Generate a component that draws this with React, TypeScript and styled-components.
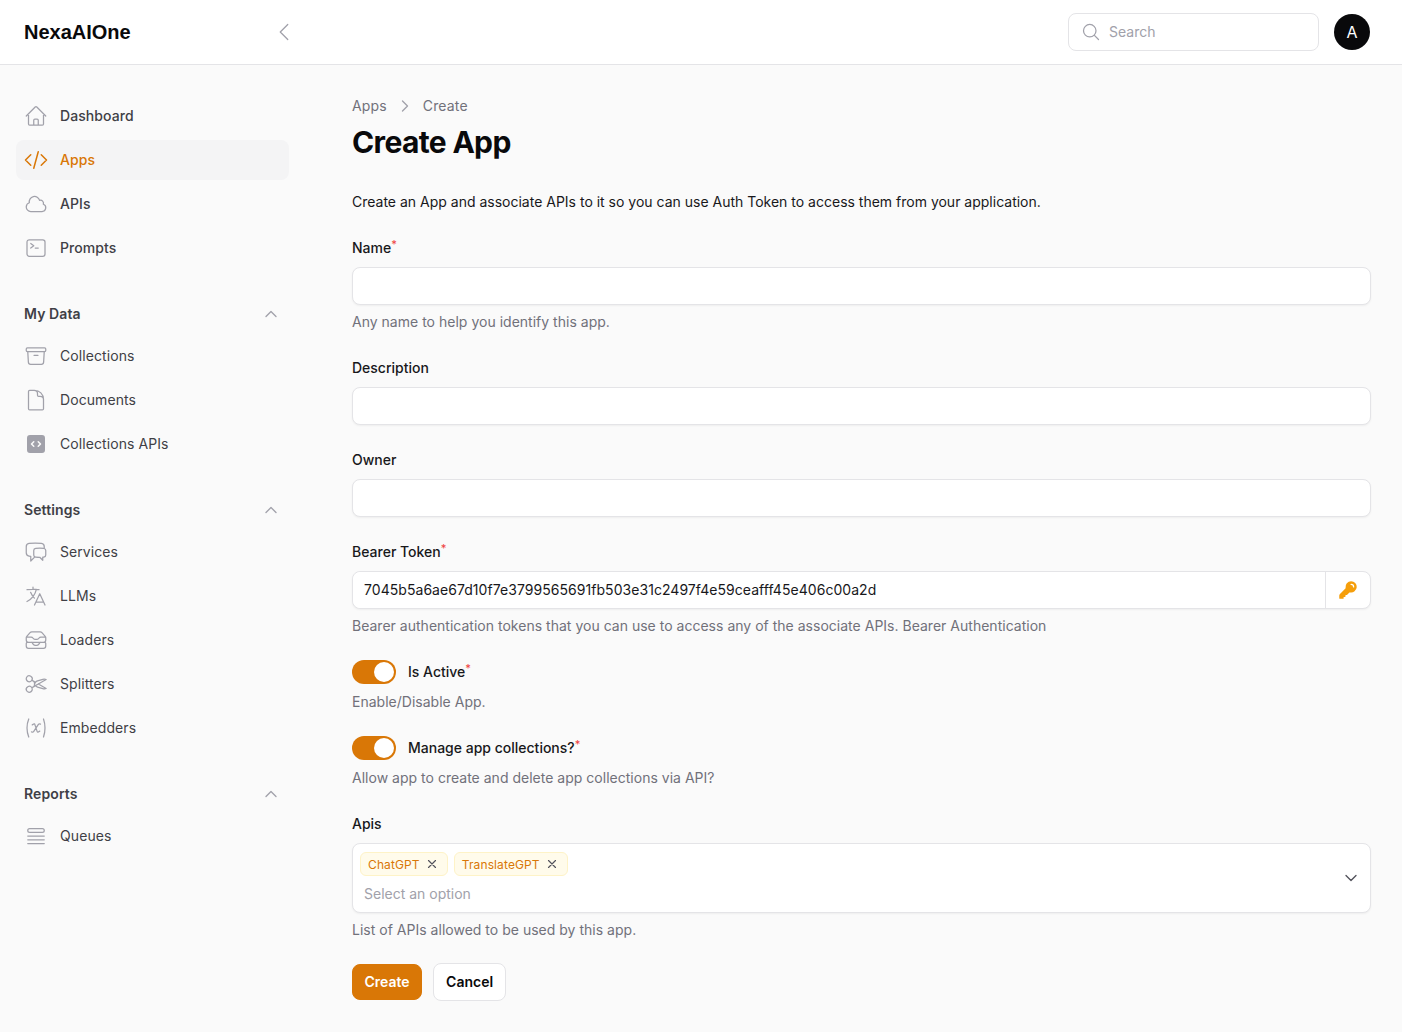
import React from "react";
import styled, { createGlobalStyle } from "styled-components";
import {
  HiCodeBracketSquare,
  HiKey,
  HiOutlineArchiveBox,
  HiOutlineChatBubbleLeftRight,
  HiOutlineChevronDown,
  HiOutlineChevronLeft,
  HiOutlineChevronRight,
  HiOutlineChevronUp,
  HiOutlineCloud,
  HiOutlineCodeBracket,
  HiOutlineCommandLine,
  HiOutlineDocument,
  HiOutlineHome,
  HiOutlineInboxStack,
  HiOutlineLanguage,
  HiOutlineMagnifyingGlass,
  HiOutlineQueueList,
  HiOutlineScissors,
  HiOutlineVariable,
  HiOutlineXMark,
} from "react-icons/hi2";

const amber = "#d97706";
const border = "#e4e4e7";

const GlobalStyle = createGlobalStyle`
  * { box-sizing: border-box; }
  body {
    margin: 0;
    background: #fafafa;
    color: #18181b;
    font-family: Inter, "Noto Sans", sans-serif;
    font-size: 14px;
    line-height: 20px;
  }
`;

const Header = styled.header`
  height: 65px;
  display: flex;
  align-items: center;
  padding: 0 32px 1px 24px;
  background: #fff;
  border-bottom: 1px solid ${border};
`;

const Logo = styled.div`
  width: 248px;
  font-family: "Liberation Sans", Arial, sans-serif;
  font-size: 20px;
  font-weight: 700;
  color: #09090b;
`;

const Collapse = styled.button`
  display: flex;
  padding: 0;
  border: 0;
  background: none;
  color: #a1a1aa;
  svg {
    width: 24px;
    height: 24px;
  }
`;

const SearchBox = styled.label`
  width: 251px;
  height: 38px;
  margin-left: auto;
  display: flex;
  align-items: center;
  gap: 8px;
  padding: 0 12px;
  background: #fff;
  border: 1px solid ${border};
  border-radius: 8px;
  color: #a1a1aa;
  svg {
    flex: none;
    width: 20px;
    height: 20px;
  }
`;

const SearchInput = styled.input`
  width: 100%;
  min-width: 0;
  padding: 0;
  border: 0;
  outline: none;
  font: inherit;
  &::placeholder {
    color: #a1a1aa;
  }
`;

const Avatar = styled.div`
  width: 36px;
  height: 36px;
  margin-left: 15px;
  display: flex;
  align-items: center;
  justify-content: center;
  border-radius: 50%;
  background: #09090b;
  color: #fff;
  font-size: 16px;
`;

const Body = styled.div`
  display: flex;
`;

const Sidebar = styled.aside`
  flex: none;
  width: 320px;
  padding: 31px 31px 0 16px;
`;

const NavList = styled.nav`
  display: flex;
  flex-direction: column;
  gap: 4px;
`;

const NavItem = styled.a<{ $active?: boolean }>`
  height: 40px;
  display: flex;
  align-items: center;
  gap: 12px;
  padding-left: 8px;
  border-radius: 8px;
  font-weight: 500;
  letter-spacing: 0.08px;
  background: ${(p) => (p.$active ? "#f4f4f5" : "transparent")};
  color: ${(p) => (p.$active ? amber : "#3f3f46")};
  svg {
    flex: none;
    width: 24px;
    height: 24px;
    color: ${(p) => (p.$active ? amber : "#a1a1aa")};
  }
`;

const SubItem = styled(NavItem)`
  font-weight: 400;
`;

const SectionHead = styled.div`
  margin: 36px 0 12px;
  display: flex;
  align-items: center;
  justify-content: space-between;
  padding: 0 10px 0 8px;
  font-weight: 600;
  letter-spacing: 0.1px;
  color: #3f3f46;
  svg {
    width: 16px;
    height: 16px;
    color: #a1a1aa;
  }
`;

const Main = styled.main`
  flex: 1;
  min-width: 0;
  padding: 31px 31px 32px 32px;
`;

const Crumbs = styled.div`
  display: flex;
  align-items: center;
  gap: 10px;
  color: #71717a;
  letter-spacing: 0.15px;
  svg {
    width: 16px;
    height: 16px;
    color: #a1a1aa;
  }
`;

const Title = styled.h1`
  margin: 8px 0 32px;
  font-size: 30px;
  line-height: 36px;
  font-weight: 700;
  letter-spacing: -0.65px;
  color: #09090b;
`;

const Intro = styled.p`
  margin: 0 0 26px;
`;

const Field = styled.div<{ $after?: number }>`
  margin-bottom: ${(p) => p.$after ?? 25}px;
`;

const Label = styled.label`
  display: block;
  margin-bottom: 9px;
  font-weight: 500;
`;

const Required = styled.sup`
  color: #ef4444;
  font-size: 11px;
  line-height: 0;
  vertical-align: 5px;
`;

const Input = styled.input`
  display: block;
  width: 100%;
  height: 38px;
  padding: 0 11px;
  background: #fff;
  border: 1px solid ${border};
  border-radius: 8px;
  box-shadow: 0 1px 2px rgba(0, 0, 0, 0.05);
  outline: none;
  font: inherit;
  color: #18181b;
`;

const Hint = styled.p`
  margin: 7px 0 0;
  color: #71717a;
  letter-spacing: 0.014px;
`;

const TokenGroup = styled.div`
  height: 38px;
  display: flex;
  background: #fff;
  border: 1px solid ${border};
  border-radius: 8px;
  box-shadow: 0 1px 2px rgba(0, 0, 0, 0.05);
`;

const TokenInput = styled.input`
  flex: 1;
  min-width: 0;
  padding: 0 11px;
  border: 0;
  border-radius: 8px 0 0 8px;
  outline: none;
  font: inherit;
  letter-spacing: 0.05px;
  color: #18181b;
`;

const TokenAction = styled.button`
  flex: none;
  width: 45px;
  display: flex;
  align-items: center;
  justify-content: center;
  padding: 0;
  background: none;
  border: 0;
  border-left: 1px solid ${border};
  color: #f59e0b;
  svg {
    width: 20px;
    height: 20px;
  }
`;

const ToggleRow = styled.div`
  display: flex;
  align-items: center;
  gap: 12px;
  font-weight: 500;
`;

const Toggle = styled.span`
  width: 44px;
  height: 24px;
  display: flex;
  justify-content: flex-end;
  padding: 2px;
  border-radius: 12px;
  background: ${amber};
  &::after {
    content: "";
    width: 20px;
    height: 20px;
    border-radius: 50%;
    background: #fff;
  }
`;

const ToggleHint = styled(Hint)`
  margin-top: 8px;
`;

const MultiSelect = styled.div`
  position: relative;
  height: 70px;
  padding: 8px 12px 0 7px;
  background: #fff;
  border: 1px solid ${border};
  border-radius: 8px;
  box-shadow: 0 1px 2px rgba(0, 0, 0, 0.05);
`;

const Tags = styled.div`
  display: flex;
  gap: 6px;
`;

const Tag = styled.span`
  height: 24px;
  display: flex;
  align-items: center;
  gap: 5px;
  padding: 1px 8px 0 7px;
  background: #fffbeb;
  border: 1px solid #fef3c7;
  border-radius: 6px;
  color: ${amber};
  font-size: 12px;
  letter-spacing: 0.12px;
  svg {
    width: 14px;
    height: 14px;
    margin-top: -1px;
    color: #52525b;
  }
`;

const SelectPlaceholder = styled.div`
  margin: 8px 0 0 4px;
  color: #a1a1aa;
`;

const SelectChevron = styled.span`
  position: absolute;
  top: 26px;
  right: 11px;
  display: flex;
  color: #52525b;
  svg {
    width: 16px;
    height: 16px;
  }
`;

const Actions = styled.div`
  display: flex;
  align-items: center;
  gap: 11px;
`;

const Button = styled.button<{ $primary?: boolean }>`
  height: ${(p) => (p.$primary ? 36 : 38)}px;
  padding: 0 ${(p) => (p.$primary ? 11.5 : 12)}px;
  border-radius: 8px;
  border: 1px solid ${(p) => (p.$primary ? amber : border)};
  background: ${(p) => (p.$primary ? amber : "#fff")};
  color: ${(p) => (p.$primary ? "#fff" : "#09090b")};
  font: inherit;
  font-weight: 600;
`;

const topNav = [
  { label: "Dashboard", icon: HiOutlineHome },
  { label: "Apps", icon: HiOutlineCodeBracket, active: true },
  { label: "APIs", icon: HiOutlineCloud },
  { label: "Prompts", icon: HiOutlineCommandLine },
];

const sections = [
  {
    title: "My Data",
    items: [
      { label: "Collections", icon: HiOutlineArchiveBox },
      { label: "Documents", icon: HiOutlineDocument },
      { label: "Collections APIs", icon: HiCodeBracketSquare, solid: true },
    ],
  },
  {
    title: "Settings",
    items: [
      { label: "Services", icon: HiOutlineChatBubbleLeftRight },
      { label: "LLMs", icon: HiOutlineLanguage },
      { label: "Loaders", icon: HiOutlineInboxStack },
      { label: "Splitters", icon: HiOutlineScissors },
      { label: "Embedders", icon: HiOutlineVariable },
    ],
  },
  {
    title: "Reports",
    items: [{ label: "Queues", icon: HiOutlineQueueList }],
  },
];

const token = "7045b5a6ae67d10f7e3799565691fb503e31c2497f4e59ceafff45e406c00a2d";

const App = () => {
  return (
    <>
      <GlobalStyle />
      <Header>
        <Logo>NexaAIOne</Logo>
        <Collapse>
          <HiOutlineChevronLeft strokeWidth={1.25} />
        </Collapse>
        <SearchBox>
          <HiOutlineMagnifyingGlass strokeWidth={1.5} />
          <SearchInput placeholder="Search" />
        </SearchBox>
        <Avatar>A</Avatar>
      </Header>
      <Body>
        <Sidebar>
          <NavList>
            {topNav.map(({ label, icon: Icon, active }) => (
              <NavItem key={label} $active={active}>
                <Icon strokeWidth={active ? 1.5 : 1.25} />
                {label}
              </NavItem>
            ))}
          </NavList>
          {sections.map((section) => (
            <div key={section.title}>
              <SectionHead>
                {section.title}
                <HiOutlineChevronUp strokeWidth={2} />
              </SectionHead>
              <NavList>
                {section.items.map(({ label, icon: Icon, solid }) => (
                  <SubItem key={label}>
                    <Icon strokeWidth={solid ? 0 : 1.25} />
                    {label}
                  </SubItem>
                ))}
              </NavList>
            </div>
          ))}
        </Sidebar>
        <Main>
          <Crumbs>
            <span>Apps</span>
            <HiOutlineChevronRight strokeWidth={2} />
            <span>Create</span>
          </Crumbs>
          <Title>Create App</Title>
          <Intro>
            Create an App and associate APIs to it so you can use Auth Token to access them from your application.
          </Intro>
          <Field $after={26}>
            <Label>
              Name<Required>*</Required>
            </Label>
            <Input />
            <Hint>Any name to help you identify this app.</Hint>
          </Field>
          <Field>
            <Label>Description</Label>
            <Input />
          </Field>
          <Field>
            <Label>Owner</Label>
            <Input />
          </Field>
          <Field $after={24}>
            <Label>
              Bearer Token<Required>*</Required>
            </Label>
            <TokenGroup>
              <TokenInput defaultValue={token} />
              <TokenAction>
                <HiKey />
              </TokenAction>
            </TokenGroup>
            <Hint>Bearer authentication tokens that you can use to access any of the associate APIs. Bearer Authentication</Hint>
          </Field>
          <Field $after={24}>
            <ToggleRow>
              <Toggle />
              <span>
                Is Active<Required>*</Required>
              </span>
            </ToggleRow>
            <ToggleHint>Enable/Disable App.</ToggleHint>
          </Field>
          <Field $after={26}>
            <ToggleRow>
              <Toggle />
              <span>
                Manage app collections?<Required>*</Required>
              </span>
            </ToggleRow>
            <ToggleHint>Allow app to create and delete app collections via API?</ToggleHint>
          </Field>
          <Field $after={23}>
            <Label>Apis</Label>
            <MultiSelect>
              <Tags>
                <Tag>
                  ChatGPT
                  <HiOutlineXMark strokeWidth={2} />
                </Tag>
                <Tag>
                  TranslateGPT
                  <HiOutlineXMark strokeWidth={2} />
                </Tag>
              </Tags>
              <SelectPlaceholder>Select an option</SelectPlaceholder>
              <SelectChevron>
                <HiOutlineChevronDown strokeWidth={2} />
              </SelectChevron>
            </MultiSelect>
            <Hint>List of APIs allowed to be used by this app.</Hint>
          </Field>
          <Actions>
            <Button $primary>Create</Button>
            <Button>Cancel</Button>
          </Actions>
        </Main>
      </Body>
    </>
  );
};

export default App;
